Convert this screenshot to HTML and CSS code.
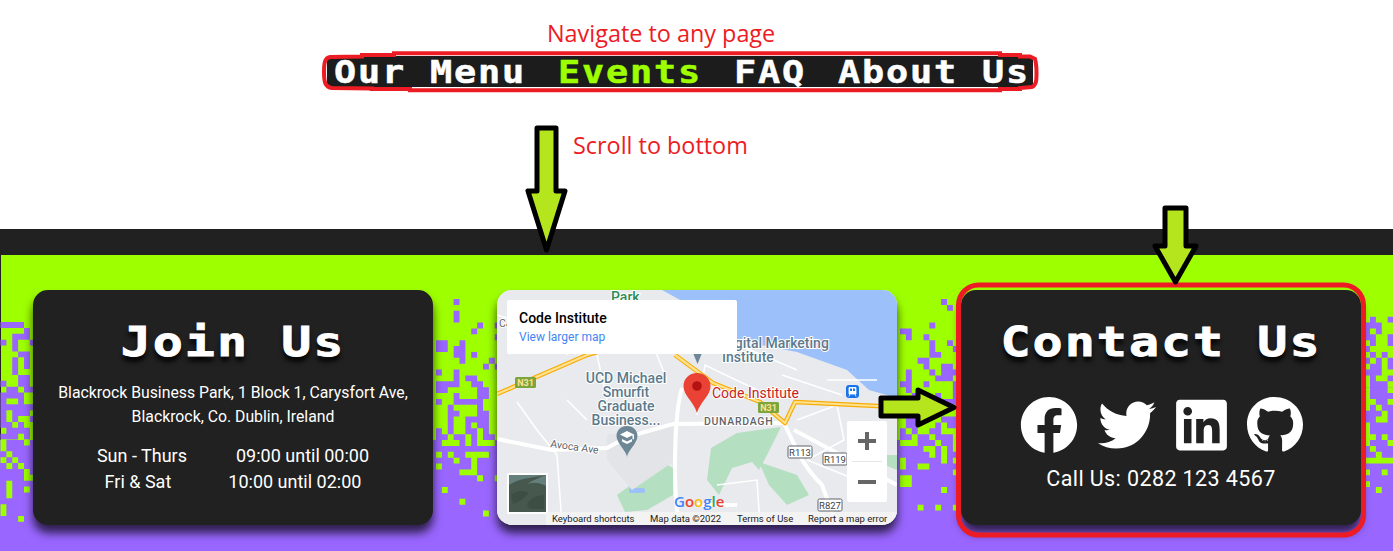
FILE: index.html
```html
<!DOCTYPE html>
<html lang="en">
<head>
<meta charset="utf-8">
<title>Footer guide</title>
<link rel="stylesheet" href="styles.css">
</head>
<body>
<header class="top">
  <nav class="nav">
    <div class="nav-links">
      <a class="nav-link">Our Menu</a>
      <a class="nav-link active">Events</a>
      <a class="nav-link">FAQ</a>
      <a class="nav-link">About Us</a>
    </div>
  </nav>
</header>

<footer class="footer">
  <svg class="pixels" viewBox="0 255 1393 296" aria-hidden="true">
    <rect class="px-p" x="0" y="440" width="1393" height="111"/>
    <rect class="px-p" x="1366" y="387" width="27" height="53"/>
    <g transform="translate(0.5 322) scale(5.875)">
      <path class="px-p" d="M0 0h4v1h-4zM4 1h1v1h-1zM2 2h3v1h-3zM0 3h1v1h-1zM2 3h1v1h-1zM5 3h1v1h-1zM2 4h1v1h-1zM3 5h2v1h-2zM2 6h1v1h-1zM4 6h1v1h-1zM2 7h1v1h-1zM4 7h1v1h-1zM2 8h1v1h-1zM3 9h2v1h-2zM0 10h1v1h-1zM3 10h2v1h-2zM1 11h2v1h-2zM4 11h2v1h-2zM0 12h4v1h-4zM0 13h1v1h-1zM3 13h1v1h-1zM0 14h6v1h-6zM0 15h1v1h-1zM2 15h3v1h-3zM0 16h1v1h-1zM2 16h1v1h-1zM5 16h1v1h-1zM0 17h2v1h-2zM3 17h1v1h-1zM1 18h4v1h-4zM0 19h3v1h-3zM4 19h1v1h-1z"/>
      <path class="px-g" d="M0 20h1v2h-1zM4 20h1v1h-1zM1 22h1v1h-1zM0 23h1v1h-1zM2 23h1v1h-1zM1 24h1v1h-1zM3 24h1v1h-1zM4 25h1v2h-1zM5 26h1v1h-1zM1 27h1v3h-1zM4 28h1v1h-1zM0 31h1v2h-1zM3 33h1v1h-1z"/>
    </g>
    <g transform="translate(436 299) scale(5.875)">
      <path class="px-p" d="M3 0h1v1h-1zM3 2h1v2h-1zM7 4h1v1h-1zM10 4h1v1h-1zM6 5h1v1h-1zM10 6h1v1h-1zM0 7h2v2h-2zM4 7h1v1h-1zM3 8h2v1h-2zM3 9h2v1h-2zM6 9h1v1h-1zM4 10h1v1h-1zM9 10h1v1h-1zM8 11h1v1h-1zM10 11h1v1h-1zM0 12h1v1h-1zM3 12h1v2h-1zM5 13h2v1h-2zM0 14h4v1h-4zM6 14h2v1h-2zM0 15h2v1h-2zM7 15h2v1h-2zM3 16h1v1h-1zM7 16h2v1h-2zM0 17h1v1h-1zM3 17h5v1h-5zM2 18h1v1h-1zM7 18h1v1h-1zM2 19h2v1h-2zM7 19h2v1h-2zM2 20h1v1h-1zM5 20h4v1h-4zM2 21h1v1h-1zM5 21h1v1h-1zM7 21h2v1h-2zM0 22h1v1h-1zM2 22h1v1h-1zM5 22h2v1h-2zM8 22h1v1h-1zM0 23h2v1h-2zM3 23h2v1h-2zM6 23h1v1h-1zM8 23h2v1h-2z"/>
      <path class="px-g" d="M1 24h3v1h-3zM5 24h1v1h-1zM7 24h3v1h-3zM0 26h1v1h-1zM2 26h1v1h-1zM5 26h4v1h-4zM3 27h1v1h-1zM6 27h1v2h-1zM0 28h1v1h-1zM4 29h3v1h-3zM7 30h1v1h-1zM10 30h1v1h-1zM1 32h1v1h-1zM4 34h1v1h-1zM8 36h1v1h-1z"/>
    </g>
    <g transform="translate(900 299) scale(5.875)">
      <path class="px-p" d="M7 0h1v1h-1zM8 1h1v1h-1zM5 4h1v1h-1zM0 5h2v1h-2zM1 6h1v1h-1zM4 6h1v1h-1zM5 7h1v1h-1zM8 7h1v1h-1zM5 8h1v1h-1zM9 8h1v1h-1zM5 9h2v1h-2zM3 10h2v1h-2zM4 11h1v1h-1zM7 11h2v1h-2zM1 12h1v1h-1zM5 12h1v1h-1zM7 12h3v1h-3zM1 13h1v1h-1zM6 13h3v1h-3zM0 14h2v1h-2zM4 14h1v1h-1zM9 14h1v1h-1zM1 15h1v1h-1zM9 15h1v1h-1zM2 16h2v1h-2zM6 16h1v1h-1zM9 16h1v1h-1zM7 17h3v1h-3zM1 20h2v1h-2zM7 20h3v1h-3zM1 21h2v1h-2zM6 21h1v1h-1zM8 21h2v1h-2zM0 22h1v1h-1zM2 22h1v1h-1zM5 22h2v1h-2zM0 23h2v1h-2zM3 23h2v1h-2zM6 23h3v1h-3z"/>
      <path class="px-g" d="M0 24h3v1h-3zM6 24h1v1h-1zM9 24h1v1h-1zM4 25h2v1h-2zM7 25h1v1h-1zM9 25h1v1h-1zM5 26h1v1h-1zM7 26h1v1h-1zM0 27h1v1h-1zM7 27h1v1h-1zM9 27h1v1h-1zM0 28h1v1h-1zM3 28h2v1h-2zM9 29h1v1h-1zM0 30h2v2h-2zM7 32h1v1h-1zM3 35h1v1h-1zM6 35h1v1h-1zM9 35h1v1h-1z"/>
    </g>
    <g transform="translate(1370 299) scale(5.875)">
      <path class="px-p" d="M0 3h1v1h-1zM3 3h1v1h-1zM-1 4h3v1h-3zM-1 5h1v1h-1zM1 5h1v1h-1zM-1 6h2v1h-2zM3 6h1v1h-1zM0 7h1v1h-1zM3 7h1v1h-1zM-1 8h1v1h-1zM0 9h1v1h-1zM2 9h1v1h-1zM-1 10h1v1h-1zM1 10h1v1h-1zM3 10h1v1h-1zM0 11h2v1h-2zM3 11h1v1h-1zM-1 12h3v1h-3zM0 13h1v1h-1zM3 13h1v1h-1zM0 14h3v1h-3z"/>
      <path class="px-g" d="M-1 15h1v4h-1zM3 15h1v1h-1zM0 17h1v1h-1zM3 17h1v1h-1zM1 18h1v1h-1zM2 19h1v2h-1zM1 20h1v1h-1zM-1 21h1v4h-1zM0 23h1v1h-1zM2 23h1v1h-1zM3 24h1v1h-1zM0 25h1v1h-1zM1 26h1v1h-1zM-1 27h6v1h-6zM-1 29h1v1h-1zM2 29h1v1h-1zM-1 31h1v1h-1zM1 32h1v1h-1z"/>
    </g>
  </svg>

  <section class="card card-join">
    <h2 class="card-title">Join Us</h2>
    <p class="address">Blackrock Business Park, 1 Block 1, Carysfort Ave, Blackrock, Co. Dublin, Ireland</p>
    <div class="hours">
      <div class="hours-row"><span>Sun - Thurs</span><span>09:00 until 00:00</span></div>
      <div class="hours-row hours-row-wide"><span>Fri &amp; Sat</span><span>10:00 until 02:00</span></div>
    </div>
  </section>

  <section class="card card-map">
    <svg class="map" viewBox="0 0 400 235" role="img" aria-label="Map of Code Institute">
      <rect width="400" height="235" fill="#e8eaed"/>
      <path d="M165 0L216 28L238 50L300 62L350 80L372 100L400 108V0Z" fill="#9cc0f9"/>
      <g fill="#b5dfc1">
        <path d="M214 158L240 143L284 137L270 165L262 180L255 172L235 178L222 205L210 190Z"/>
        <path d="M120 205L165 172L176 178L176 205L150 220L128 222Z"/>
        <path d="M262 172L300 185L312 205L290 215L272 195Z"/>
        <path d="M385 165H400V180L388 175Z"/>
      </g>
      <rect x="132" y="198" width="16" height="5" rx="2" fill="#9cc0f9"/>
      <path d="M110 145L176 136V172L135 200L110 170Z" fill="#e3e4e7"/>
      <g fill="none" stroke="#fff" stroke-width="1.5">
        <path d="M0 25C30 35 60 30 70 65M150 40L170 90M200 125L208 75L260 100M285 85L345 105M300 130L340 115L347 150L310 170M20 112L40 140L60 165M70 110L90 130M60 165L65 235M220 195L260 190L263 235M310 170L360 190M230 50L300 80M330 90L380 90M100 65L110 110"/>
      </g>
      <g fill="none" stroke="#fff" stroke-width="4">
        <path d="M0 149L55 160L110 158L130 147L176 134L287 133"/>
        <path d="M185 98C178 120 175 190 182 235"/>
        <path d="M287 133C300 160 305 175 325 195L340 235"/>
        <path d="M297 140L400 195"/>
        <path d="M200 215H240"/>
      </g>
      <g fill="none" stroke-linejoin="round">
        <path d="M0 104L90 65L100 62M178 65L216 93L263 112L288 133L298 112L380 116L400 118" stroke="#f9ab00" stroke-width="4.5"/>
        <path d="M0 104L90 65L100 62M178 65L216 93L263 112L288 133L298 112L380 116L400 118" stroke="#fde293" stroke-width="2.2"/>
      </g>
      <rect x="18" y="87" width="21" height="11" rx="1.5" fill="#7ca53c"/>
      <text class="shield" x="28.5" y="96" text-anchor="middle">N31</text>
      <rect x="261" y="112" width="21" height="11" rx="1.5" fill="#7ca53c"/>
      <text class="shield" x="271.5" y="121" text-anchor="middle">N31</text>
      <g class="road-box">
        <rect x="291" y="156" width="24" height="12" rx="1.5"/>
        <rect x="326" y="163" width="24" height="12" rx="1.5"/>
        <rect x="321" y="209" width="24" height="12" rx="1.5"/>
      </g>
      <text class="road-text" x="303" y="166" text-anchor="middle">R113</text>
      <text class="road-text" x="338" y="173" text-anchor="middle">R119</text>
      <text class="road-text" x="333" y="219" text-anchor="middle">R827</text>

      <text class="label label-green" x="114" y="12">Park</text>
      <text class="label" x="225" y="58">Digital Marketing</text>
      <text class="label" x="225" y="72">Institute</text>
      <text class="label" x="129" y="93" text-anchor="middle">UCD Michael</text>
      <text class="label" x="129" y="107" text-anchor="middle">Smurfit</text>
      <text class="label" x="129" y="121" text-anchor="middle">Graduate</text>
      <text class="label" x="129" y="135" text-anchor="middle">Business...</text>
      <text class="label-small" x="207" y="135">DUNARDAGH</text>
      <text class="label-road" transform="translate(53 157) rotate(8)">Avoca Ave</text>
      <text class="label-road" x="2" y="37">Ca</text>

      <path d="M130 136c-6.500 0-10.500 4.800-10.500 10 0 7 10.500 16 10.500 21c0-5 10.500-14 10.500-21c0-5.200-4-10-10.500-10z" fill="#6d8797"/>
      <path d="M130 141l-7 3.500l7 3.500l5.500-2.700v4h1.500v-4.800zM125 149v2.500l5 2.500l5-2.500v-2.500l-5 2.500z" fill="#fff"/>
      <path d="M212 58h-13l6.500 16z" fill="#6d8797" transform="translate(-5 0)"/>

      <rect x="349" y="95" width="13" height="13" rx="3" fill="#1a73e8"/>
      <path d="M352 97.500h7v6.500h-7zM353 104l-1 2.500M358 104l1 2.500" fill="#fff" stroke="#fff" stroke-width=".8"/>
      <rect x="353" y="98.500" width="2" height="2.500" fill="#1a73e8"/>
      <rect x="356" y="98.500" width="2" height="2.500" fill="#1a73e8"/>

      <path d="M200 83c-8 0-13.500 6-13.500 13c0 10 10 15 13.500 27c3.500-12 13.500-17 13.500-27c0-7-5.500-13-13.500-13z" fill="#ea4335"/>
      <circle cx="200" cy="96" r="4.800" fill="#b31412"/>
      <text class="label-pin" x="215" y="108">Code Institute</text>

      <rect x="10" y="10" width="230" height="54" rx="2" fill="#fff"/>
      <text class="popup-title" x="22" y="33">Code Institute</text>
      <text class="popup-link" x="22" y="51">View larger map</text>

      <rect x="350" y="131" width="40" height="81" rx="2" fill="#fff"/>
      <rect x="355" y="171" width="30" height="1" fill="#e6e6e6"/>
      <path d="M361 151h18M370 142v18" stroke="#666" stroke-width="4" fill="none"/>
      <path d="M361 192h18" stroke="#666" stroke-width="4" fill="none"/>

      <rect x="10" y="183" width="41" height="41" rx="1" fill="#fff"/>
      <rect x="12" y="185" width="37" height="37" fill="#47594f"/>
      <path d="M12 195C22 188 34 188 49 185H12ZM49 185V196C42 192 36 192 30 194C36 190 42 188 49 185Z" fill="#65807c"/>
      <path d="M14 205C20 200 26 200 32 203C28 208 22 212 16 214ZM30 214C34 208 40 205 47 205V219H32Z" fill="#3d4f45"/>

      <text class="google" x="177" y="217"><tspan fill="#4285f4">G</tspan><tspan fill="#ea4335">o</tspan><tspan fill="#fbbc04">o</tspan><tspan fill="#4285f4">g</tspan><tspan fill="#34a853">l</tspan><tspan fill="#ea4335">e</tspan></text>

      <rect x="49" y="222" width="351" height="13" fill="#f5f5f5" opacity=".85"/>
      <text class="attr" x="55" y="232">Keyboard shortcuts</text>
      <text class="attr" x="153" y="232">Map data ©2022</text>
      <text class="attr" x="240" y="232">Terms of Use</text>
      <text class="attr" x="311" y="232">Report a map error</text>
    </svg>
  </section>

  <section class="card card-contact">
    <h2 class="card-title">Contact Us</h2>
    <div class="socials">
      <svg class="social" viewBox="0 0 512 512" aria-label="Facebook"><path d="M504 256C504 119 393 8 256 8S8 119 8 256c0 123.780 90.690 226.380 209.250 245V327.690h-63V256h63v-54.640c0-62.150 37-96.480 93.670-96.480 27.140 0 55.520 4.840 55.520 4.840v61h-31.280c-30.800 0-40.410 19.120-40.410 38.730V256h68.780l-11 71.690h-57.780V501C413.310 482.380 504 379.780 504 256z"/></svg>
      <svg class="social" viewBox="0 0 512 512" aria-label="Twitter"><path d="M459.370 151.716c.325 4.548.325 9.097.325 13.645 0 138.720-105.583 298.558-298.558 298.558-59.452 0-114.680-17.219-161.137-47.106 8.447.974 16.568 1.299 25.340 1.299 49.055 0 94.213-16.568 130.274-44.832-46.132-.975-84.792-31.188-98.112-72.772 6.498.974 12.995 1.624 19.818 1.624 9.421 0 18.843-1.300 27.614-3.573-48.081-9.747-84.143-51.980-84.143-102.985v-1.299c13.969 7.797 30.214 12.670 47.431 13.319-28.264-18.843-46.781-51.005-46.781-87.391 0-19.492 5.197-37.360 14.294-52.954 51.655 63.675 129.300 105.258 216.365 109.807-1.624-7.797-2.599-15.918-2.599-24.040 0-57.828 46.782-104.934 104.934-104.934 30.213 0 57.502 12.670 76.670 33.137 23.715-4.548 46.456-13.320 66.599-25.340-7.798 24.366-24.366 44.833-46.132 57.827 21.117-2.273 41.584-8.122 60.426-16.243-14.292 20.791-32.161 39.308-52.628 54.253z"/></svg>
      <svg class="social social-in" viewBox="0 0 448 512" aria-label="LinkedIn"><path d="M416 32H31.900C14.300 32 0 46.500 0 64.300v383.400C0 465.500 14.300 480 31.900 480H416c17.600 0 32-14.500 32-32.300V64.300c0-17.800-14.400-32.300-32-32.300zM135.400 416H69V202.200h66.500V416zm-33.200-243c-21.300 0-38.500-17.300-38.500-38.500S80.900 96 102.200 96c21.200 0 38.500 17.300 38.500 38.500 0 21.300-17.200 38.500-38.500 38.500zm282.100 243h-66.400V312c0-24.800-.5-56.700-34.500-56.700-34.600 0-39.900 27-39.900 54.900V416h-66.400V202.200h63.700v29.200h.9c8.900-16.800 30.600-34.500 62.900-34.500 67.200 0 79.700 44.300 79.700 101.900V416z"/></svg>
      <svg class="social social-gh" viewBox="0 0 496 512" aria-label="GitHub"><path d="M165.900 397.400c0 2-2.300 3.600-5.200 3.600-3.300 0-5.600-1.600-5.600-3.600 0-2 2.300-3.600 5.200-3.600 3-.3 5.600 1.300 5.600 3.600zm-31.100-4.500c-.7 2 1.300 4.300 4.300 4.900 2.600 1 5.600 0 6.200-2s-1.300-4.300-4.300-5.200c-2.600-.7-5.500.3-6.200 2.300zm44.200-1.700c-2.900.7-4.900 2.600-4.600 4.900.3 2 2.900 3.300 5.900 2.600 2.900-.7 4.900-2.600 4.600-4.600-.3-1.900-3-3.200-5.900-2.900zM244.800 8C106.100 8 0 113.300 0 252c0 110.900 69.800 205.800 169.500 239.200 12.800 2.300 17.300-5.600 17.300-12.100 0-6.200-.3-40.400-.3-61.400 0 0-70 15-84.700-29.800 0 0-11.400-29.100-27.800-36.600 0 0-22.900-15.700 1.600-15.400 0 0 24.900 2 38.600 25.800 21.900 38.600 58.600 27.500 72.900 20.900 2.300-16 8.800-27.100 16-33.700-55.900-6.200-112.300-14.300-112.300-110.500 0-27.500 7.600-41.300 23.600-58.900-2.600-6.500-11.100-33.300 2.600-67.900 20.900-6.500 69 27 69 27 20-5.600 41.500-8.500 62.800-8.500s42.800 2.900 62.800 8.500c0 0 48.100-33.600 69-27 13.700 34.700 5.200 61.400 2.600 67.900 16 17.700 25.800 31.500 25.800 58.900 0 96.500-58.900 104.200-114.800 110.500 9.200 7.900 17 22.900 17 46.400 0 33.700-.3 75.400-.3 83.600 0 6.500 4.600 14.400 17.300 12.100C428.200 457.800 496 362.900 496 252 496 113.300 381.500 8 244.800 8z"/></svg>
    </div>
    <p class="call">Call Us: 0282 123 4567</p>
  </section>
</footer>

<div class="annotations">
  <p class="note note-nav">Navigate to any page</p>
  <p class="note note-scroll">Scroll to bottom</p>
  <svg class="marks" viewBox="0 0 1393 551" aria-hidden="true">
    <path class="ring" d="M324 72C324 62 325 58 330 57L362 56.500V55H394V53.300H1000V55H1020V56.500H1030L1035 59C1036.500 64 1036.500 70 1036.500 73C1036.500 80 1036.500 85 1032 87L1020 88V89H1000V90.300H410V89H372V88.500L332 88C325 87 324 82 324 72Z"/>
    <rect class="ring-box" x="958.500" y="285" width="405" height="250" rx="20"/>
    <polygon class="arrow" points="537,128 556,128 556,191 565,191 546.500,250 528,191 537,191"/>
    <polygon class="arrow" points="1165,208 1186,208 1186,246 1196,246 1175.500,282 1155,246 1165,246"/>
    <polygon class="arrow" points="881,398 918,398 918,390 954,407.500 918,425 918,416 881,416"/>
  </svg>
</div>
</body>
</html>
```

FILE: styles.css
```css
* { box-sizing: border-box; }

html, body { margin: 0; padding: 0; }

body {
  position: relative;
  width: 1393px;
  height: 551px;
  overflow: hidden;
  background: #fff;
  font-family: "Roboto", "Liberation Sans", sans-serif;
}

.top {
  height: 229px;
  padding: 56px 0 0 327px;
}

.nav {
  width: 706px;
  height: 31px;
  padding: 3px 0 0 7px;
  background: #1c1c1c;
}

.nav-links {
  display: flex;
  gap: 27.8px;
  transform: scaleX(1.15);
  transform-origin: left center;
  white-space: nowrap;
}

.nav-link {
  font-family: "DejaVu Sans Mono", monospace;
  font-weight: 700;
  font-size: 32px;
  line-height: 26px;
  letter-spacing: 1.61px;
  color: #fff;
  -webkit-text-stroke: .5px #fff;
  white-space: nowrap;
}

.nav-link.active {
  color: #9eff00;
  -webkit-text-stroke-color: #9eff00;
}

.footer {
  position: relative;
  display: flex;
  gap: 64px;
  height: 322px;
  padding: 35px 32px 0;
  background: #9eff00;
  border-top: 26px solid #212121;
  border-left: 1px solid #212121;
}

.pixels {
  position: absolute;
  left: -1px;
  top: 0;
  width: 1393px;
  height: 296px;
}

.px-p { fill: #9966ff; }
.px-g { fill: #9eff00; }

.card {
  position: relative;
  width: 400px;
  height: 235px;
  border-radius: 15px;
  background: #212121;
  box-shadow: 0 8px 10px rgba(0, 0, 0, .7);
  color: #fff;
  text-align: center;
}

.card-join { padding-top: 32px; }
.card-contact { padding-top: 32px; }

.card-title {
  margin: 0;
  font-family: "DejaVu Sans Mono", monospace;
  font-weight: 700;
  font-size: 40px;
  line-height: 40px;
  letter-spacing: 1.6px;
  color: #fff;
  -webkit-text-stroke: .8px #fff;
  text-shadow: 0 5px 5px #000;
  transform: scaleX(1.25);
}

.address {
  margin: 19px 20px 0;
  font-size: 15.8px;
  line-height: 24px;
}

.hours {
  margin-top: 14px;
  font-size: 18px;
  line-height: 26px;
}

.hours-row {
  display: flex;
  justify-content: center;
  gap: 49px;
}

.hours-row-wide { gap: 57px; }

.card-map { overflow: hidden; background: #e8eaed; }

.map {
  display: block;
  width: 400px;
  height: 235px;
}

.label {
  font-size: 14px;
  font-weight: 500;
  fill: #5b7a8c;
  stroke: #fff;
  stroke-width: 2px;
  paint-order: stroke;
}

.label-green { fill: #2e8b57; }

.label-small {
  font-size: 10.5px;
  font-weight: 500;
  letter-spacing: .7px;
  fill: #5f6368;
  stroke: #fff;
  stroke-width: 2px;
  paint-order: stroke;
}

.label-road {
  font-size: 10.5px;
  fill: #5f6368;
  stroke: #fff;
  stroke-width: 2px;
  paint-order: stroke;
}

.label-pin {
  font-size: 14px;
  fill: #c5221f;
  stroke: #fff;
  stroke-width: 2px;
  paint-order: stroke;
}

.shield {
  font-size: 9px;
  font-weight: 700;
  fill: #fde293;
}

.road-box rect {
  fill: #fff;
  stroke: #5f6368;
  stroke-width: 1;
}

.road-text {
  font-size: 9.5px;
  fill: #3c4043;
}

.popup-title {
  font-size: 14px;
  font-weight: 500;
  fill: #000;
}

.popup-link {
  font-size: 12px;
  fill: #4285f4;
}

.google {
  font-family: "Open Sans", sans-serif;
  font-size: 15px;
  font-weight: 600;
}

.attr {
  font-size: 9.5px;
  fill: #222;
}

.socials {
  display: flex;
  justify-content: center;
  gap: 20px;
  margin-top: 34px;
}

.social {
  display: block;
  width: 58px;
  height: 58px;
  fill: #fff;
}

.social-in { width: 51px; }
.social-gh { width: 56px; }

.call {
  margin: 12px 0 0;
  font-size: 21.5px;
  line-height: 26px;
  letter-spacing: .4px;
}

.annotations {
  position: absolute;
  inset: 0;
  pointer-events: none;
}

.marks {
  position: absolute;
  left: 0;
  top: 0;
  width: 1393px;
  height: 551px;
}

.note {
  position: absolute;
  margin: 0;
  font-family: "Open Sans", sans-serif;
  font-size: 23.4px;
  line-height: 30px;
  color: #ed1c24;
  white-space: nowrap;
}

.note-nav { left: 547px; top: 18px; }
.note-scroll { left: 573px; top: 130px; }

.ring {
  fill: none;
  stroke: #ed1c24;
  stroke-width: 4px;
}

.ring-box {
  fill: none;
  stroke: #ed1c24;
  stroke-width: 5px;
}

.arrow {
  fill: #b5e61d;
  stroke: #000;
  stroke-width: 5px;
  stroke-linejoin: round;
}
```
